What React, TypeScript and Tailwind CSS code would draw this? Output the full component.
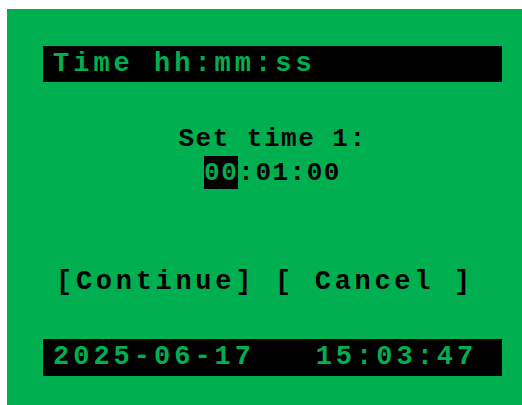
import React, { useState } from 'react';

// Monochrome-style LCD time setting screen
const mono = { fontFamily: '"Liberation Mono", "DejaVu Sans Mono", monospace' };

export default function App() {
  const [time] = useState({ hh: '00', mm: '01', ss: '00' });
  const [now] = useState({ date: '2025-06-17', clock: '15:03:47' });

  return (
    <div className="w-[522px] h-[405px] bg-white pl-[7px] pt-[9px]" style={mono}>
      <div className="h-full bg-[#00b050] flex flex-col pl-[36px] pr-[20px] pt-[37px] font-bold">
        {/* header */}
        <div className="h-[36px] bg-black flex items-center pl-[10px] text-[#00b050] text-[27px] tracking-[4px] leading-none">
          Time hh:mm:ss
        </div>

        {/* prompt + value */}
        <div className="mt-[40px] flex flex-col items-center text-black text-[26px] tracking-[1.5px] leading-none">
          <div className="h-[30px] flex items-end">Set time 1:</div>
          <div className="mt-[4px] h-[33px] flex items-center">
            <span className="bg-black text-[#00b050] h-[33px] flex items-center">{time.hh}</span>
            <span>:{time.mm}:{time.ss}</span>
          </div>
        </div>

        {/* actions */}
        <div className="mt-[80px] flex justify-center text-black text-[27px] tracking-[3.7px] leading-none pr-[15px]">
          <span className="whitespace-pre">[Continue] [ Cancel ]</span>
        </div>

        {/* status bar */}
        <div className="mt-[43px] h-[37px] bg-black flex items-center pl-[10px] text-[#00b050] text-[27px] tracking-[4px] leading-none whitespace-pre">
          {now.date}   {now.clock}
        </div>
      </div>
    </div>
  );
}
